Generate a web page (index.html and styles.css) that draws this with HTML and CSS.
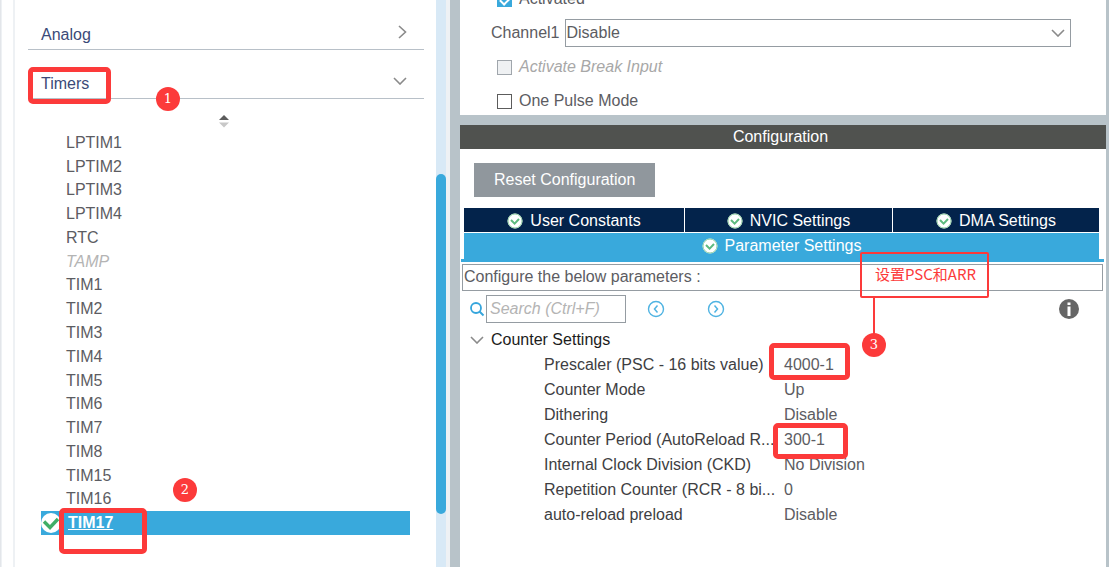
FILE: index.html
```
<!DOCTYPE html>
<html lang="zh-CN">
<head>
  <meta charset="UTF-8" />
  <meta name="viewport" content="width=device-width, initial-scale=1.0"/>
  <title>TIM17 Mode and Configuration</title>
  <link rel="stylesheet" href="styles.css">
</head>
<body>
  <svg class="defs" width="0" height="0" aria-hidden="true">
    <symbol id="ok" viewBox="0 0 16 16">
      <circle cx="8" cy="8" r="7.5" fill="#fff"/>
      <circle cx="8" cy="8" r="7" fill="none" stroke="#8fcfa3" stroke-width="1"/>
      <path d="M4 7l3.600 3.600L12 6" fill="none" stroke="#5dba7e" stroke-width="2"/>
    </symbol>
    <symbol id="down" viewBox="0 0 14 8">
      <path d="M1 1l6 6 6-6" fill="none" stroke="#8a8a8a" stroke-width="1.6"/>
    </symbol>
  </svg>

  <aside class="sidebar">
    <div class="tree">
      <button class="category">Analog
        <svg width="9" height="14" viewBox="0 0 9 14"><path d="M1 1l6.500 6-6.500 6" fill="none" stroke="#8a8a8a" stroke-width="1.600"/></svg>
      </button>
      <button class="category">
        <span>Timers</span>
        <svg width="14" height="8"><use href="#down"/></svg>
      </button>
      <div class="sort">
        <svg width="12" height="14" viewBox="0 0 12 14"><path d="M1 6l5-5 5 5z" fill="#5c5c5c"/><path d="M1 8.500l5 5 5-5z" fill="#c8c8c8"/></svg>
      </div>
      <ul class="timers">
        <li>LPTIM1</li>
        <li>LPTIM2</li>
        <li>LPTIM3</li>
        <li>LPTIM4</li>
        <li>RTC</li>
        <li class="unavailable">TAMP</li>
        <li>TIM1</li>
        <li>TIM2</li>
        <li>TIM3</li>
        <li>TIM4</li>
        <li>TIM5</li>
        <li>TIM6</li>
        <li>TIM7</li>
        <li>TIM8</li>
        <li>TIM15</li>
        <li>TIM16</li>
        <li class="selected">
          <svg width="20" height="20" viewBox="0 0 20 20"><circle cx="10" cy="10" r="10" fill="#fff"/><path d="M3 8.500l6 6 8-8.500" fill="none" stroke="#3fae67" stroke-width="3.400"/></svg>
          <a href="#">TIM17</a>
        </li>
      </ul>
    </div>
    <div class="scrollbar"><div class="thumb"></div></div>
  </aside>

  <main class="main">
    <section class="mode">
      <div class="mode-list">
        <label class="row check"><input type="checkbox" checked>Activated</label>
        <div class="row">
          <label for="channel1">Channel1</label>
          <div class="select-box">
            <select id="channel1"><option>Disable</option></select>
            <svg class="arrow" width="14" height="8"><use href="#down"/></svg>
          </div>
        </div>
        <label class="row check disabled"><input type="checkbox" disabled>Activate Break Input</label>
        <label class="row check"><input type="checkbox">One Pulse Mode</label>
      </div>
    </section>

    <section class="config">
      <h2>Configuration</h2>
      <button class="reset">Reset Configuration</button>
      <div class="tabs">
        <button class="tab"><svg width="16" height="16"><use href="#ok"/></svg>User Constants</button>
        <button class="tab"><svg width="16" height="16"><use href="#ok"/></svg>NVIC Settings</button>
        <button class="tab"><svg width="16" height="16"><use href="#ok"/></svg>DMA Settings</button>
        <button class="tab active"><svg width="16" height="16"><use href="#ok"/></svg>Parameter Settings</button>
      </div>
      <div class="tab-line"></div>
      <p class="hint">Configure the below parameters :</p>

      <div class="search">
        <label for="search"><svg width="16" height="16" viewBox="0 0 16 16" fill="none" stroke="#35a5dc"><circle cx="7" cy="7" r="5" stroke-width="1.800"/><path d="M10.500 10.500l4 4" stroke-width="2"/></svg></label>
        <input id="search" type="text" placeholder="Search (Ctrl+F)">
        <button aria-label="Previous"><svg width="18" height="18" viewBox="0 0 18 18" fill="none" stroke="#4fb3e2"><circle cx="9" cy="9" r="7.500" stroke-width="1.400"/><path d="M10.500 5.500L7.500 9l3 3.500" stroke-width="1.500"/></svg></button>
        <button aria-label="Next"><svg width="18" height="18" viewBox="0 0 18 18" fill="none" stroke="#4fb3e2"><circle cx="9" cy="9" r="7.500" stroke-width="1.400"/><path d="M7.500 5.500l3 3.500-3 3.500" stroke-width="1.500"/></svg></button>
        <button class="info" aria-label="Info"><svg width="20" height="20" viewBox="0 0 20 20"><circle cx="10" cy="10" r="10" fill="#666"/><path d="M8.500 7.500h3V17h-3zM8.500 3.500h3v2.500h-3z" fill="#fff"/></svg></button>
      </div>

      <div class="group"><svg width="14" height="8"><use href="#down"/></svg>Counter Settings</div>
      <table class="params">
        <tr><th scope="row">Prescaler (PSC - 16 bits value)</th><td>4000-1</td></tr>
        <tr><th scope="row">Counter Mode</th><td>Up</td></tr>
        <tr><th scope="row">Dithering</th><td>Disable</td></tr>
        <tr><th scope="row">Counter Period (AutoReload R...</th><td>300-1</td></tr>
        <tr><th scope="row">Internal Clock Division (CKD)</th><td>No Division</td></tr>
        <tr><th scope="row">Repetition Counter (RCR - 8 bi...</th><td>0</td></tr>
        <tr><th scope="row">auto-reload preload</th><td>Disable</td></tr>
      </table>
    </section>
  </main>

  <!-- step marks -->
  <div class="mark mark-timers"></div>
  <div class="mark mark-tim17"></div>
  <div class="mark mark-psc"></div>
  <div class="mark mark-arr"></div>
  <div class="note">设置PSC和ARR</div>
  <div class="note-line"></div>
  <div class="step step-1">1</div>
  <div class="step step-2">2</div>
  <div class="step step-3">3</div>
</body>
</html>
```
FILE: styles.css
```
* {
  box-sizing: border-box;
  margin: 0;
  padding: 0;
}

body {
  position: relative;
  display: flex;
  min-height: 100vh;
  font-family: "Liberation Sans", "Noto Sans CJK SC", sans-serif;
  font-size: 16px;
  line-height: 20px;
  color: #5c5c62;
  background: #b8c3c9;
}

button,
input,
select {
  font: inherit;
  color: inherit;
  border: none;
  background: none;
}

svg {
  display: block;
  flex: none;
}

.defs {
  position: absolute;
}

/* left tree */
.sidebar {
  display: flex;
  width: 450px;
  flex: none;
  padding-right: 4px;
  background: #eef1f4;
  border-left: 1px solid #e3e6ea;
}

.tree {
  flex: 1;
  margin-left: 1px;
  padding: 1px 12px 0 13px;
  background: linear-gradient(to right, #fff 11px, #eef1f4 11px, #eef1f4 13px, #fff 13px);
}

.category {
  display: flex;
  align-items: center;
  justify-content: space-between;
  width: calc(100% - 13px);
  height: 49px;
  margin-left: 13px;
  padding: 19px 17px 0 13px;
  border-bottom: 1px solid #b8c0c8;
  color: #3b4a78;
}

.category svg {
  margin-bottom: 5px;
}

.sort {
  display: flex;
  justify-content: center;
  padding: 15px 0 3px 8px;
}

.timers {
  display: grid;
  grid-auto-rows: 1fr;
  height: 404px;
  margin: 0 14px 0 26px;
  list-style: none;
}

.timers li {
  display: flex;
  align-items: center;
  padding-left: 25px;
}

.timers .unavailable {
  color: #b4b4b4;
  font-style: italic;
}

.timers .selected {
  gap: 7px;
  padding-left: 0;
  background: #39a9dc;
}

.selected a {
  color: #fff;
  font-weight: bold;
}

.scrollbar {
  display: flex;
  width: 10px;
  padding: 174px 0 53px;
  background: #d8e9f6;
}

.thumb {
  flex: 1;
  border-radius: 5px;
  background: #39a9dc;
}

/* right side */
.main {
  display: flex;
  flex: 1;
  flex-direction: column;
  gap: 10px;
  padding: 0 3px 0 10px;
}

.mode {
  height: 115px;
  padding: 0 35px 0 31px;
  overflow: hidden;
  background: #fff;
}

.mode-list {
  margin-top: -18px;
}

.row {
  display: flex;
  align-items: center;
  gap: 5px;
  height: 34px;
}

.check {
  gap: 7px;
  padding-left: 6px;
}

.check input {
  width: 15px;
  height: 15px;
  appearance: none;
  border: 1px solid #5c5c5c;
}

.check input:checked {
  border-color: #39a9dc;
  background: #39a9dc;
}

.check input:checked::after {
  content: "";
  display: block;
  width: 5px;
  height: 9px;
  margin: 1px 4px;
  border: solid #fff;
  border-width: 0 2px 2px 0;
  transform: rotate(45deg);
}

.check input:disabled {
  border-color: #a0a6ac;
  background: #eff1f3;
}

.disabled {
  color: #a8a8a8;
  font-style: italic;
}

.select-box {
  position: relative;
  flex: 1;
}

.select-box select {
  display: block;
  width: 100%;
  height: 28px;
  padding-left: 1px;
  appearance: none;
  border: 1px solid #959ca2;
}

.arrow {
  position: absolute;
  top: 10px;
  right: 6px;
  pointer-events: none;
}

.config {
  flex: 1;
  background: #fff;
}

.config h2 {
  height: 24px;
  padding-right: 5px;
  font-size: 16px;
  font-weight: normal;
  line-height: 24px;
  text-align: center;
  color: #fff;
  background: #50524f;
}

.reset {
  display: block;
  height: 34px;
  margin: 14px 0 11px 14px;
  padding: 0 20px;
  color: #fff;
  background: #90979d;
}

.tabs {
  display: grid;
  grid-template-columns: 220fr 207fr 206fr;
  gap: 1px;
  margin: 0 7px 0 4px;
}

.tab {
  display: flex;
  align-items: center;
  justify-content: center;
  gap: 7px;
  height: 24px;
  padding-top: 1px;
  color: #fff;
  background: #03234b;
}

.tab.active {
  grid-column: 1 / -1;
  height: 26px;
  padding: 0 0 1px;
  background: #39a9dc;
}

.tab-line {
  height: 3px;
  margin: 0 2px 2px 1px;
  background: #39a9dc;
}

.hint {
  height: 27px;
  margin: 0 3px 0 2px;
  padding: 2px 1px;
  border: 1px solid #959ca2;
}

.search {
  display: flex;
  align-items: center;
  margin: 4px 27px 0 9px;
}

.search input {
  width: 140px;
  height: 28px;
  margin: 0 21px 0 1px;
  padding-left: 3px;
  border: 1px solid #959ca2;
}

.search input::placeholder {
  color: #b4b4b4;
  font-style: italic;
}

.search button {
  margin-right: 42px;
}

.search .info {
  margin: 0 0 0 auto;
}

.group {
  display: flex;
  align-items: center;
  gap: 7px;
  height: 25px;
  margin: 4px 0 0 10px;
  color: #1c1c1c;
}

.params {
  margin-left: 84px;
  border-collapse: collapse;
}

.params th,
.params td {
  height: 25px;
  text-align: left;
  white-space: nowrap;
}

.params th {
  width: 240px;
  font-weight: normal;
  color: #3e3e42;
}

/* red marks drawn over the page */
.mark,
.note,
.note-line,
.step {
  position: absolute;
  pointer-events: none;
}

.mark {
  border: 5px solid #fc3a3a;
  border-radius: 5px;
}

.mark-timers {
  left: 28px;
  top: 67px;
  width: 83px;
  height: 37px;
}

.mark-tim17 {
  left: 59px;
  top: 508px;
  width: 88px;
  height: 46px;
}

.mark-psc {
  left: 769px;
  top: 343px;
  width: 81px;
  height: 37px;
}

.mark-arr {
  left: 773px;
  top: 423px;
  width: 75px;
  height: 36px;
}

.note {
  left: 860px;
  top: 252px;
  width: 129px;
  height: 46px;
  padding: 10px 13px;
  border: 2px solid #fc3a3a;
  border-radius: 2px;
  font-family: "Noto Sans CJK SC", sans-serif;
  font-size: 15px;
  line-height: 20px;
  white-space: nowrap;
  color: #fc3a3a;
}

.note-line {
  left: 873px;
  top: 297px;
  width: 2px;
  height: 40px;
  background: #fc3a3a;
}

.step {
  width: 24px;
  height: 24px;
  border-radius: 50%;
  font-family: "DejaVu Serif", serif;
  font-size: 13px;
  line-height: 24px;
  text-align: center;
  color: #fff;
  background: #fc3a3a;
}

.step-1 {
  left: 156px;
  top: 87px;
}

.step-2 {
  left: 173px;
  top: 478px;
}

.step-3 {
  left: 862px;
  top: 333px;
}
```
